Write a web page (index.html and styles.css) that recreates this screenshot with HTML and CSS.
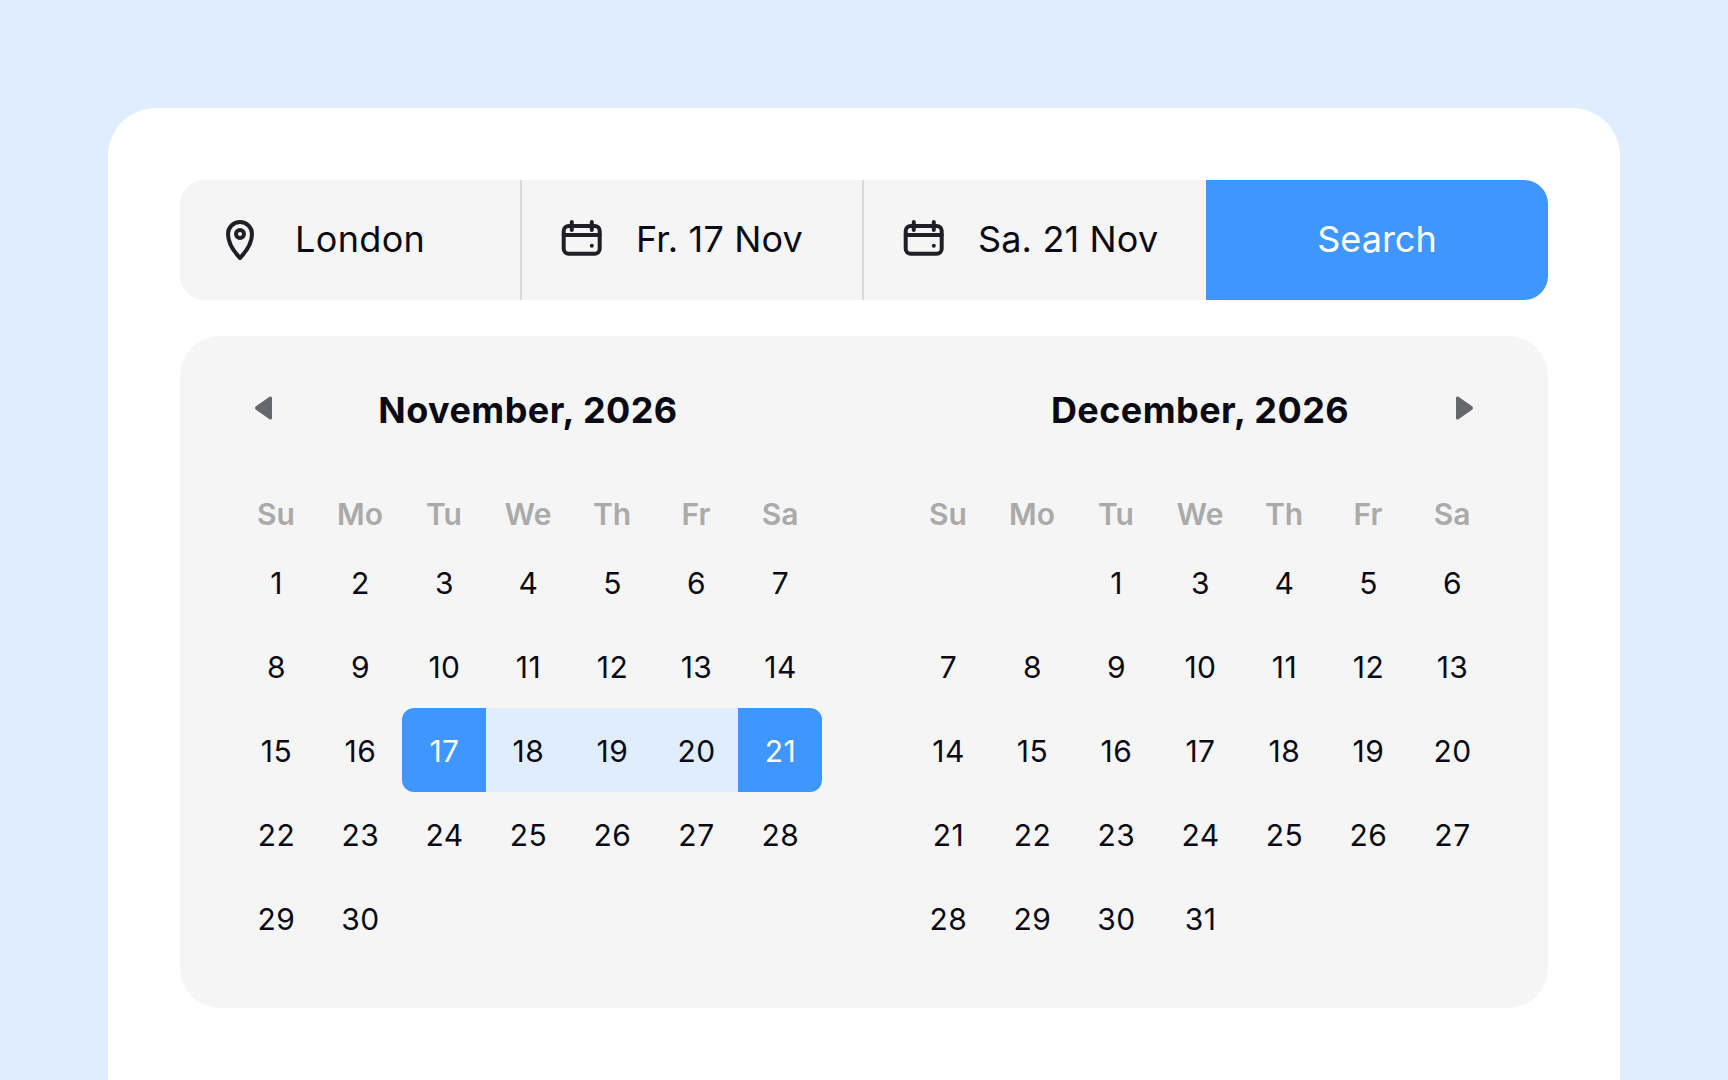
FILE: index.html
```html
<!DOCTYPE html>
<html lang="en">
<head>
<meta charset="utf-8">
<title>Date search</title>
<link rel="stylesheet" href="styles.css">
</head>
<body>
<main class="card">
  <form class="search-bar">
    <div class="field">
      <svg class="field-icon" viewBox="0 0 48 48" fill="none" stroke="#1f1f27" stroke-width="4" stroke-linejoin="round"><path d="M24 42C19.400 37.200 12 28.200 12 18 12 11.400 17.400 6 24 6S36 11.400 36 18C36 28.200 28.600 37.200 24 42Z"/><circle cx="24" cy="18" r="4"/></svg>
      <span class="place">London</span>
    </div>
    <div class="field">
      <svg class="field-icon" viewBox="0 0 48 48" fill="none" stroke="#1f1f27" stroke-width="4" stroke-linecap="round" stroke-linejoin="round"><rect x="5.700" y="10" width="36" height="27.700" rx="5"/><path d="M5.700 19H41.700M13.800 6V14M33.800 6V14"/><circle cx="33.800" cy="29.700" r="2" fill="#1f1f27" stroke="none"/></svg>
      <span>Fr. 17 Nov</span>
    </div>
    <div class="field">
      <svg class="field-icon" viewBox="0 0 48 48" fill="none" stroke="#1f1f27" stroke-width="4" stroke-linecap="round" stroke-linejoin="round"><rect x="5.700" y="10" width="36" height="27.700" rx="5"/><path d="M5.700 19H41.700M13.800 6V14M33.800 6V14"/><circle cx="33.800" cy="29.700" r="2" fill="#1f1f27" stroke="none"/></svg>
      <span>Sa. 21 Nov</span>
    </div>
    <button class="search-btn" type="button">Search</button>
  </form>

  <section class="panel">
    <div class="month">
      <header class="month-head">
        <svg class="arrow" viewBox="0 0 17 24" fill="#66666e"><path d="M14.500 .8C15.500 0 17 .6 17 2V22C17 23.400 15.500 24 14.500 23.200L1 13.800C-.3 12.900-.3 11.100 1 10.200Z"/></svg>
        <h2>November, 2026</h2>
      </header>
      <div class="grid">
        <div class="wd">Su</div><div class="wd">Mo</div><div class="wd">Tu</div><div class="wd">We</div><div class="wd">Th</div><div class="wd">Fr</div><div class="wd">Sa</div>
        <div class="day">1</div><div class="day">2</div><div class="day">3</div><div class="day">4</div><div class="day">5</div><div class="day">6</div><div class="day">7</div>
        <div class="day">8</div><div class="day">9</div><div class="day">10</div><div class="day">11</div><div class="day">12</div><div class="day">13</div><div class="day">14</div>
        <div class="day">15</div><div class="day">16</div><div class="day start">17</div><div class="day range">18</div><div class="day range">19</div><div class="day range">20</div><div class="day end">21</div>
        <div class="day">22</div><div class="day">23</div><div class="day">24</div><div class="day">25</div><div class="day">26</div><div class="day">27</div><div class="day">28</div>
        <div class="day">29</div><div class="day">30</div>
      </div>
    </div>
    <div class="month">
      <header class="month-head">
        <h2>December, 2026</h2>
        <svg class="arrow arrow-next" viewBox="0 0 17 24" fill="#66666e"><path d="M2.500 .8C1.500 0 0 .6 0 2V22C0 23.400 1.500 24 2.500 23.200L16 13.800C17.300 12.900 17.300 11.100 16 10.200Z"/></svg>
      </header>
      <div class="grid">
        <div class="wd">Su</div><div class="wd">Mo</div><div class="wd">Tu</div><div class="wd">We</div><div class="wd">Th</div><div class="wd">Fr</div><div class="wd">Sa</div>
        <div class="day"></div><div class="day"></div><div class="day">1</div><div class="day">3</div><div class="day">4</div><div class="day">5</div><div class="day">6</div>
        <div class="day">7</div><div class="day">8</div><div class="day">9</div><div class="day">10</div><div class="day">11</div><div class="day">12</div><div class="day">13</div>
        <div class="day">14</div><div class="day">15</div><div class="day">16</div><div class="day">17</div><div class="day">18</div><div class="day">19</div><div class="day">20</div>
        <div class="day">21</div><div class="day">22</div><div class="day">23</div><div class="day">24</div><div class="day">25</div><div class="day">26</div><div class="day">27</div>
        <div class="day">28</div><div class="day">29</div><div class="day">30</div><div class="day">31</div>
      </div>
    </div>
  </section>
</main>
</body>
</html>
```
FILE: styles.css
```css
* { box-sizing: border-box; }

html, body { height: 100%; }

body {
  margin: 0;
  padding: 108px 108px 0;
  overflow: hidden;
  background: #e0edfe;
  font-family: Inter, "Noto Sans", sans-serif;
  font-optical-sizing: none;
  color: #0a0a14;
}

.card {
  background: #fff;
  border-radius: 48px 48px 0 0;
  padding: 72px;
  height: 972px;
  overflow: hidden;
}

.search-bar {
  display: grid;
  grid-template-columns: repeat(4, 1fr);
  height: 120px;
  margin: 0;
}

.field {
  display: flex;
  align-items: center;
  gap: 30px;
  padding-left: 36px;
  padding-bottom: 2px;
  background: #f5f5f5;
  border-right: 2px solid #d9d9d9;
  font-size: 36px;
  letter-spacing: .15px;
}

.field:first-child { border-radius: 24px 0 0 24px; }

.field:nth-child(3) { border-right: 0; }

.field-icon { width: 48px; height: 48px; flex: none; margin-top: 2px; }

.place { margin-left: 1px; letter-spacing: .35px; }

.search-btn {
  border: 0;
  padding: 0 0 2px;
  border-radius: 0 24px 24px 0;
  background: #4096ff;
  color: #fff;
  font: inherit;
  font-size: 36px;
}

.panel {
  display: flex;
  justify-content: space-between;
  margin-top: 36px;
  padding: 40px 54px 0;
  height: 672px;
  border-radius: 40px;
  background: #f5f5f5;
}

.month { width: 588px; }

.month-head {
  position: relative;
  display: flex;
  align-items: center;
  justify-content: center;
  height: 68px;
  margin-bottom: 12px;
}

.month-head h2 {
  margin: 0;
  font-size: 36px;
  font-weight: 700;
  line-height: 68px;
  letter-spacing: .45px;
}

.arrow {
  position: absolute;
  left: 21px;
  top: 20px;
  width: 17px;
  height: 24px;
}

.arrow-next { left: auto; right: 21px; }

.grid {
  display: grid;
  grid-template-columns: repeat(7, 84px);
  grid-auto-rows: 84px;
}

.wd, .day {
  display: flex;
  align-items: center;
  justify-content: center;
  font-size: 30px;
}

.day {
  padding: 2px 0 0 1px;
  font-weight: 380;
  letter-spacing: .5px;
}

.wd {
  align-items: flex-end;
  padding-bottom: 8px;
  font-weight: 600;
  color: #aaa;
}

.range { background: #e0edfe; }

.start, .end { background: #4096ff; color: #fff; }

.start { border-radius: 12px 0 0 12px; }

.end { border-radius: 0 12px 12px 0; }
```
